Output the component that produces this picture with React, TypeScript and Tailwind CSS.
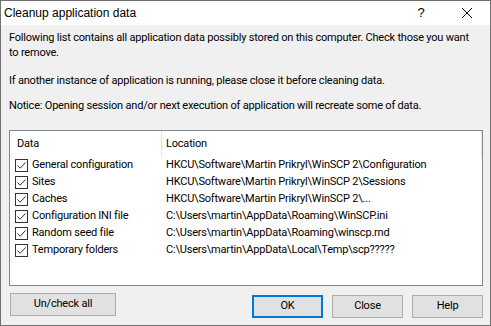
import { useState } from "react";

type Row = { name: string; location: string };

const rows: Row[] = [
  { name: "General configuration", location: "HKCU\\Software\\Martin Prikryl\\WinSCP 2\\Configuration" },
  { name: "Sites", location: "HKCU\\Software\\Martin Prikryl\\WinSCP 2\\Sessions" },
  { name: "Caches", location: "HKCU\\Software\\Martin Prikryl\\WinSCP 2\\..." },
  { name: "Configuration INI file", location: "C:\\Users\\martin\\AppData\\Roaming\\WinSCP.ini" },
  { name: "Random seed file", location: "C:\\Users\\martin\\AppData\\Roaming\\winscp.rnd" },
  { name: "Temporary folders", location: "C:\\Users\\martin\\AppData\\Local\\Temp\\scp?????" },
];

const CheckBox = ({ checked, onToggle }: { checked: boolean; onToggle: () => void }) => (
  <button
    type="button"
    onClick={onToggle}
    className="flex h-[13px] w-[13px] shrink-0 items-center justify-center border border-[#333333] bg-white"
  >
    {checked ? (
      <svg width="11" height="11" viewBox="0 0 11 11" fill="none">
        <path d="M1.5 5.5 L4.2 8.2 L9.5 2.5" stroke="#333333" strokeWidth="1" />
      </svg>
    ) : null}
  </button>
);

export default function App() {
  const [checked, setChecked] = useState<boolean[]>(rows.map(() => true));

  const toggleAll = () => {
    const next = !checked.every(Boolean);
    setChecked(rows.map(() => next));
  };

  return (
    <div className="flex h-[326px] w-[491px] flex-col border border-[#707070] bg-[#f0f0f0] font-['Roboto',sans-serif] text-[11px] tracking-[-0.2px] text-black">
      <div className="flex h-[24px] shrink-0 items-center bg-white pl-[3px] font-['Liberation_Sans',sans-serif] text-[12px] tracking-normal">
        <span className="flex-1">Cleanup application data</span>
        <span className="w-[46px] text-center text-[13px]">?</span>
        <span className="flex w-[46px] items-center justify-center">
          <svg width="10" height="10" viewBox="0 0 10 10">
            <path d="M0 0 L10 10 M10 0 L0 10" stroke="#000" strokeWidth="1" />
          </svg>
        </span>
      </div>

      <div className="flex flex-1 flex-col pl-[8px] pr-[7px] pt-[5px]">
        <p className="whitespace-nowrap leading-[15px]">
          Following list contains all application data possibly stored on this computer. Check those you want
          <br />
          to remove.
        </p>
        <p className="mt-[13px] leading-[15px]">
          If another instance of application is running, please close it before cleaning data.
        </p>
        <p className="mt-[10px] leading-[15px]">
          Notice: Opening session and/or next execution of application will recreate some of data.
        </p>

        <div className="mt-[17px] h-[156px] w-[474px] border border-[#828790] bg-white">
          <div className="flex h-[26px] items-center">
            <div className="flex h-full w-[152px] items-center border-r border-[#e5e5e5] pl-[7px]">Data</div>
            <div className="flex h-full flex-1 items-center border-r border-[#e5e5e5] pl-[4px]">Location</div>
          </div>
          {rows.map((row, i) => (
            <div key={row.name} className="flex h-[17px] items-center">
              <div className="flex w-[152px] items-center gap-[4px] pl-[5px]">
                <CheckBox
                  checked={checked[i]}
                  onToggle={() => setChecked((prev) => prev.map((v, j) => (j === i ? !v : v)))}
                />
                <span className="whitespace-nowrap">{row.name}</span>
              </div>
              <div className="whitespace-nowrap pl-[4px]">{row.location}</div>
            </div>
          ))}
        </div>

        <div className="mt-[7px] flex items-start">
          <button
            type="button"
            onClick={toggleAll}
            className="ml-[1px] h-[23px] w-[106px] border border-[#adadad] bg-[#e1e1e1]"
          >
            Un/check all
          </button>
          <div className="ml-auto mt-[2px] flex gap-[9px]">
            <button type="button" className="h-[23px] w-[71px] border-2 border-[#0078d7] bg-[#e1e1e1]">
              OK
            </button>
            <button type="button" className="h-[23px] w-[71px] border border-[#adadad] bg-[#e1e1e1]">
              Close
            </button>
            <button type="button" className="h-[23px] w-[71px] border border-[#adadad] bg-[#e1e1e1]">
              Help
            </button>
          </div>
        </div>
      </div>
    </div>
  );
}
